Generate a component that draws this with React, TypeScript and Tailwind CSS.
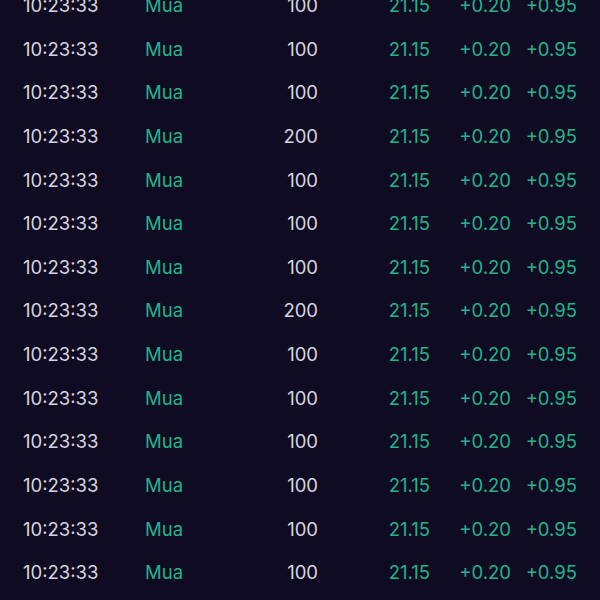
import React from "react";

const rows = [100, 100, 100, 200, 100, 100, 100, 200, 100, 100, 100, 100, 100, 100];

export default function App() {
  return (
    <div
      className="w-[600px] h-[600px] overflow-hidden bg-[#0e0b23]"
      style={{ fontFamily: "Inter, 'Noto Sans', sans-serif" }}
    >
      <div className="-mt-[16px] flex flex-col">
        {rows.map((q, i) => (
          <div key={i} className="flex items-center h-[43.65px] text-[18.5px] pl-[23px]">
            <div className="w-[122px] text-[#d6d5df]">10:23:33</div>
            <div className="w-[100px] text-[#22b48a]">Mua</div>
            <div className="w-[73px] text-right text-[#d6d5df]">{q}</div>
            <div className="w-[112px] text-right text-[#22b48a]">21.15</div>
            <div className="w-[81px] text-right text-[#22b48a]">+0.20</div>
            <div className="w-[66px] text-right text-[#22b48a]">+0.95</div>
          </div>
        ))}
      </div>
    </div>
  );
}
